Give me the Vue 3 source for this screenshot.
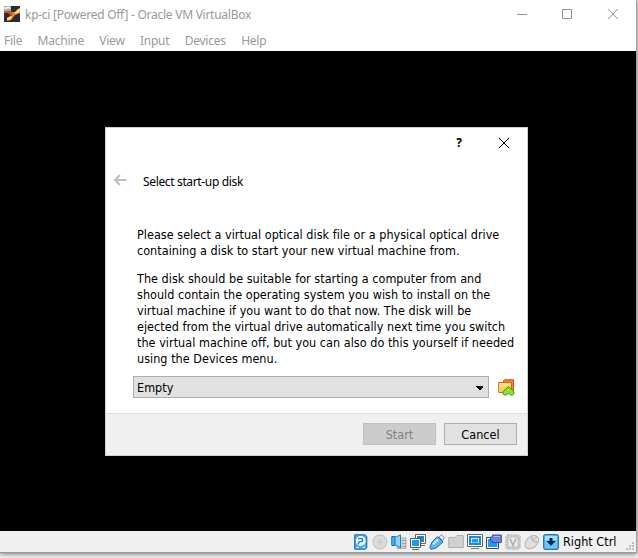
<script setup>
const menus = ['File', 'Machine', 'View', 'Input', 'Devices', 'Help']
const intro = [
  ['Please select a virtual optical disk file or a physical optical drive', 'containing a disk to start your new virtual machine from.'],
  [
    'The disk should be suitable for starting a computer from and',
    'should contain the operating system you wish to install on the',
    'virtual machine if you want to do that now. The disk will be',
    'ejected from the virtual drive automatically next time you switch',
    'the virtual machine off, but you can also do this yourself if needed',
    'using the Devices menu.',
  ],
]
</script>

<template>
  <div class="desktop">
    <div class="window">
      <header class="titlebar">
        <svg class="logo" width="16" height="16" viewBox="0 0 16 16">
          <rect width="16" height="16" fill="#252d3b" />
          <path d="M7 6L12 6L15 2H16V7L11 9L7 14L3 15L3 12L8 9Z" fill="#ef8b2e" />
          <path d="M11 6L14 3L16 3V6L11 8ZM3 12L7 10L8 12L6 14H3Z" fill="#ffd37b" />
          <path d="M0 5H7L9 8L7 10L4 7H0Z" fill="#d0541e" />
          <path d="M0 0H7V5H0Z" fill="#aaa69f" />
          <path d="M1 1V3H2V1M3 3V1H5V3M6 1V3" fill="none" stroke="#fff" />
        </svg>
        <span class="caption">kp-ci [Powered Off] - Oracle VM VirtualBox</span>
        <svg class="controls" width="102" height="12" viewBox="0 0 102 12" fill="none" stroke="#929292">
          <path d="M0 6.500H10M45.500 1.500H54.500V10.500H45.500Z" />
          <path d="M91 1L101 11M101 1L91 11" />
        </svg>
      </header>
      <nav class="menubar"><span v-for="m in menus" :key="m">{{ m }}</span></nav>
      <main class="screen">
        <section class="dialog">
          <div class="dialog-top">
            <span class="help">?</span>
            <svg width="12" height="12" viewBox="0 0 12 12"><path d="M1 1L11 11M11 1L1 11" stroke="#000" /></svg>
          </div>
          <div class="heading">
            <svg width="14" height="12" viewBox="0 0 14 12" fill="none" stroke="#bebebe" stroke-width="2"><path d="M13.500 6H2.500M7 1L2 6L7 11" /></svg>
            <span>Select start-up disk</span>
          </div>
          <div class="content">
            <p v-for="(p, i) in intro" :key="i"><span v-for="line in p" :key="line" class="line">{{ line }}</span></p>
          </div>
          <div class="picker">
            <div class="select">
              <span>Empty</span>
              <svg width="7" height="4" viewBox="0 0 7 4" shape-rendering="crispEdges"><path d="M0 0H7V1L4 4H3L0 1Z" /></svg>
            </div>
            <svg width="17" height="17" viewBox="0 0 17 17">
              <path d="M5.500 3V1.500L7 .7H15.500V12H13" fill="#ef823e" stroke="#df5417" />
              <path d="M.7 3.500H13.500V13.500H.7Z" fill="#ffe58a" stroke="#e45b1b" />
              <path d="M1.300 9L13 6V13H1.300Z" fill="#ffcb58" />
              <path d="M10.500 7.500L15.800 12.500V15L14.500 16H12.500L10.500 14L8.500 16H6.500L5 15V12.700Z" fill="#8ee52b" stroke="#3c9912" stroke-linejoin="round" />
            </svg>
          </div>
          <footer class="actions">
            <button class="btn" disabled>Start</button>
            <button class="btn">Cancel</button>
          </footer>
        </section>
      </main>
      <footer class="statusbar">
        <div class="icons">
          <svg viewBox="0 0 16 16">
            <path d="M1.700 .8H12L13.800 2.500V14L12 15.200H1.700Z" fill="#48adf0" stroke="#1769ae" />
            <circle cx="7.700" cy="7" r="4.900" fill="#fff" />
            <path d="M5 4.500H9Q11 7.500 8 7.500T5.500 10.500" fill="none" stroke="#2087d3" stroke-width="1.600" />
            <path d="M3 13.500H6M10 13.500H12" stroke="#d9f2ff" />
          </svg>
          <svg viewBox="0 0 16 16">
            <circle cx="8" cy="8" r="7" fill="#dcdcdc" stroke="#bdbdbd" />
            <circle cx="8" cy="8" r="2.300" fill="#eee" stroke="#c5c5c5" /><circle cx="8" cy="8" r=".8" fill="#888" />
          </svg>
          <svg viewBox="0 0 16 16">
            <path d="M9 4H15V14.500H6V12H9Z" fill="#d2d2d2" stroke="#b0b0b0" />
            <path d="M11 6.500H15M11 9.500H15M11 12.500H15" stroke="#a0a0a0" />
            <path d="M.8 2.500H4V11.500H.8Z" fill="#55b5f5" stroke="#1769ae" />
            <path d="M4 3.500L9.500 .8V14L4 10.500Z" fill="#8dd5fb" stroke="#1c80c5" />
          </svg>
          <svg viewBox="0 0 16 16">
            <path d="M5.500 .5H15.500V9.500H5.500Z" fill="#fff" stroke="#666" /><path d="M7 2H14V8H7Z" fill="#1684df" /><path d="M11 11.500H15" stroke="#666" />
            <path d="M.5 4.500H10.500V13.500H.5Z" fill="#fff" stroke="#555" /><path d="M2 6H9V12H2Z" fill="#1599fc" /><path d="M2 15.500H9" stroke="#666" />
          </svg>
          <svg viewBox="0 0 16 16">
            <path d="M10 3L12.500 .8L15.500 3.500L13.500 6.500Z" fill="#eee" stroke="#888" />
            <path d="M8.500 2.500L14 8L7 14L2 15.300L.8 13.500L3 8Z" fill="#59baf8" stroke="#1767ac" />
            <path d="M4 10.500L9 5.500" fill="none" stroke="#c5ebff" stroke-width="2" />
          </svg>
          <svg viewBox="0 0 16 16"><path d="M.7 3.500H7L9 1.500H15.300V13.500H.7Z" fill="#d0d0d0" stroke="#b0b0b0" /></svg>
          <svg viewBox="0 0 16 16">
            <path d="M.5 .5H15.500V12.500H.5Z" fill="#fff" stroke="#666" />
            <path d="M3 3H13V10H3Z" fill="#c4ecff" stroke="#168be6" stroke-width="2" /><path d="M5 5H11V8.500H5Z" fill="#2699ed" />
            <path d="M4 14.500H12" stroke="#777" />
          </svg>
          <svg viewBox="0 0 16 16">
            <path d="M.5 3.500H12.500V14.500H.5Z" fill="#fff" stroke="#444" /><path d="M2 5H11.500V13H2Z" fill="#1b9bf5" />
            <path d="M4.500 3H6.500V1H15.300V8.500H6.500V7H4.500Z" fill="#6e85d9" stroke="#3450a3" /><path d="M7.500 2.500H14" stroke="#aebcf0" />
          </svg>
          <svg viewBox="0 0 16 16">
            <path d="M3 1H13L15 3V13L13 15H3L1 13V3Z" fill="#d4d4d4" stroke="#b5b5b5" stroke-width="1.600" stroke-dasharray="1.500 1" />
            <rect x="3" y="3" width="10" height="10" fill="#eee" stroke="#bbb" /><path d="M5 4.500L8 11.500L11 4.500" fill="none" stroke="#b1b1b1" stroke-width="1.800" />
          </svg>
          <svg viewBox="0 0 16 16">
            <ellipse cx="7.800" cy="8.200" rx="5.500" ry="7.800" transform="rotate(48 7.800 8.200)" fill="#dedede" stroke="#b5b5b5" />
            <path d="M8 2.500Q7 8 13 8M8.500 7L13 2.500" fill="none" stroke="#aaa" />
          </svg>
          <svg viewBox="0 0 16 16">
            <rect x=".7" y=".7" width="14.600" height="14.600" rx="2" fill="#69c5fa" stroke="#2775af" stroke-width="1.300" />
            <path d="M2 2H14V6H2Z" fill="#a1e1ff" /><path d="M6.500 4H9.500V7H12.500L8 12L3.500 7H6.500Z" fill="#07244a" />
          </svg>
        </div>
        <span class="host-key">Right Ctrl</span>
        <svg class="grip" width="8" height="8" viewBox="0 0 8 8" fill="#bcbcbc"><path d="M6 0H8V2H6ZM3 3H5V5H3ZM6 3H8V5H6ZM0 6H2V8H0ZM3 6H5V8H3ZM6 6H8V8H6Z" /></svg>
      </footer>
    </div>
  </div>
</template>

<style>
body { background: #fff; }
</style>
<style scoped>
* { box-sizing: border-box; }
svg { display: block; flex: none; }
.desktop { width: 638px; height: 558px; overflow: hidden; background: #f3f3f3; }
.window { width: 637px; height: 553px; border-right: 1px solid #a0a0a0; border-bottom: 1px solid #999; background: #fff; box-shadow: 0 1px 5px #0008; display: flex; flex-direction: column; }
.titlebar { height: 31px; display: flex; align-items: center; padding: 0 17px 3px 4px; color: #999; font: 12px "Noto Sans", sans-serif; }
.caption { margin-left: 5px; letter-spacing: -.26px; white-space: nowrap; }
.controls { margin-left: auto; }
.menubar { height: 20px; display: flex; gap: 15.400px; padding-left: 4px; color: #999; font: 12px/20px "Noto Sans", sans-serif; letter-spacing: -.25px; }
.screen { height: 480px; background: #000; padding: 76px 0 0 105px; }
.dialog { width: 423px; height: 329px; background: #fff; border: 1px solid #d0d0d0; display: flex; flex-direction: column; font: 12.500px/16px "DejaVu Sans Condensed", "DejaVu Sans", sans-serif; letter-spacing: .03px; color: #000; }
.dialog-top { height: 29px; display: flex; justify-content: flex-end; align-items: center; gap: 36px; padding-right: 17px; }
.help { font: bold 12px "Noto Sans", sans-serif; }
.heading { height: 50px; display: flex; align-items: center; gap: 16px; padding: 0 0 1px 7px; font: 12px "Noto Sans", sans-serif; letter-spacing: -.35px; }
.heading svg { margin-top: -3px; }
.content { padding: 20px 0 0 31px; }
.content p { margin: 0 0 12px; }
.line { display: block; white-space: nowrap; }
.picker { display: flex; align-items: center; gap: 9px; margin-top: -3px; padding-left: 27px; }
.select { width: 356px; height: 22px; border: 1px solid #adadad; background: #e1e1e1; display: flex; align-items: center; justify-content: space-between; padding: 1px 5px 0 3px; }
.actions { height: 42px; margin-top: auto; background: #f0f0f0; border-top: 1px solid #dfdfdf; display: flex; justify-content: flex-end; gap: 8px; padding: 9px 10px 0 0; }
.btn { width: 73px; height: 22px; padding: 1px 0 0; border: 1px solid #adadad; background: #e1e1e1; font: inherit; letter-spacing: inherit; color: #000; }
.btn:disabled { background: #ccc; border-color: #bfbfbf; color: #838383; }
.statusbar { height: 21px; background: #f0f0f0; display: flex; align-items: center; padding: 0 2px 0 353px; font: 12.500px/16px "DejaVu Sans Condensed", "DejaVu Sans", sans-serif; letter-spacing: .03px; color: #000; }
.icons { display: flex; gap: 3px; }
.icons svg { width: 16px; height: 16px; }
.host-key { margin: 1px 0 0 4px; white-space: nowrap; }
.grip { margin-left: auto; align-self: flex-end; margin-bottom: 2px; }
</style>
